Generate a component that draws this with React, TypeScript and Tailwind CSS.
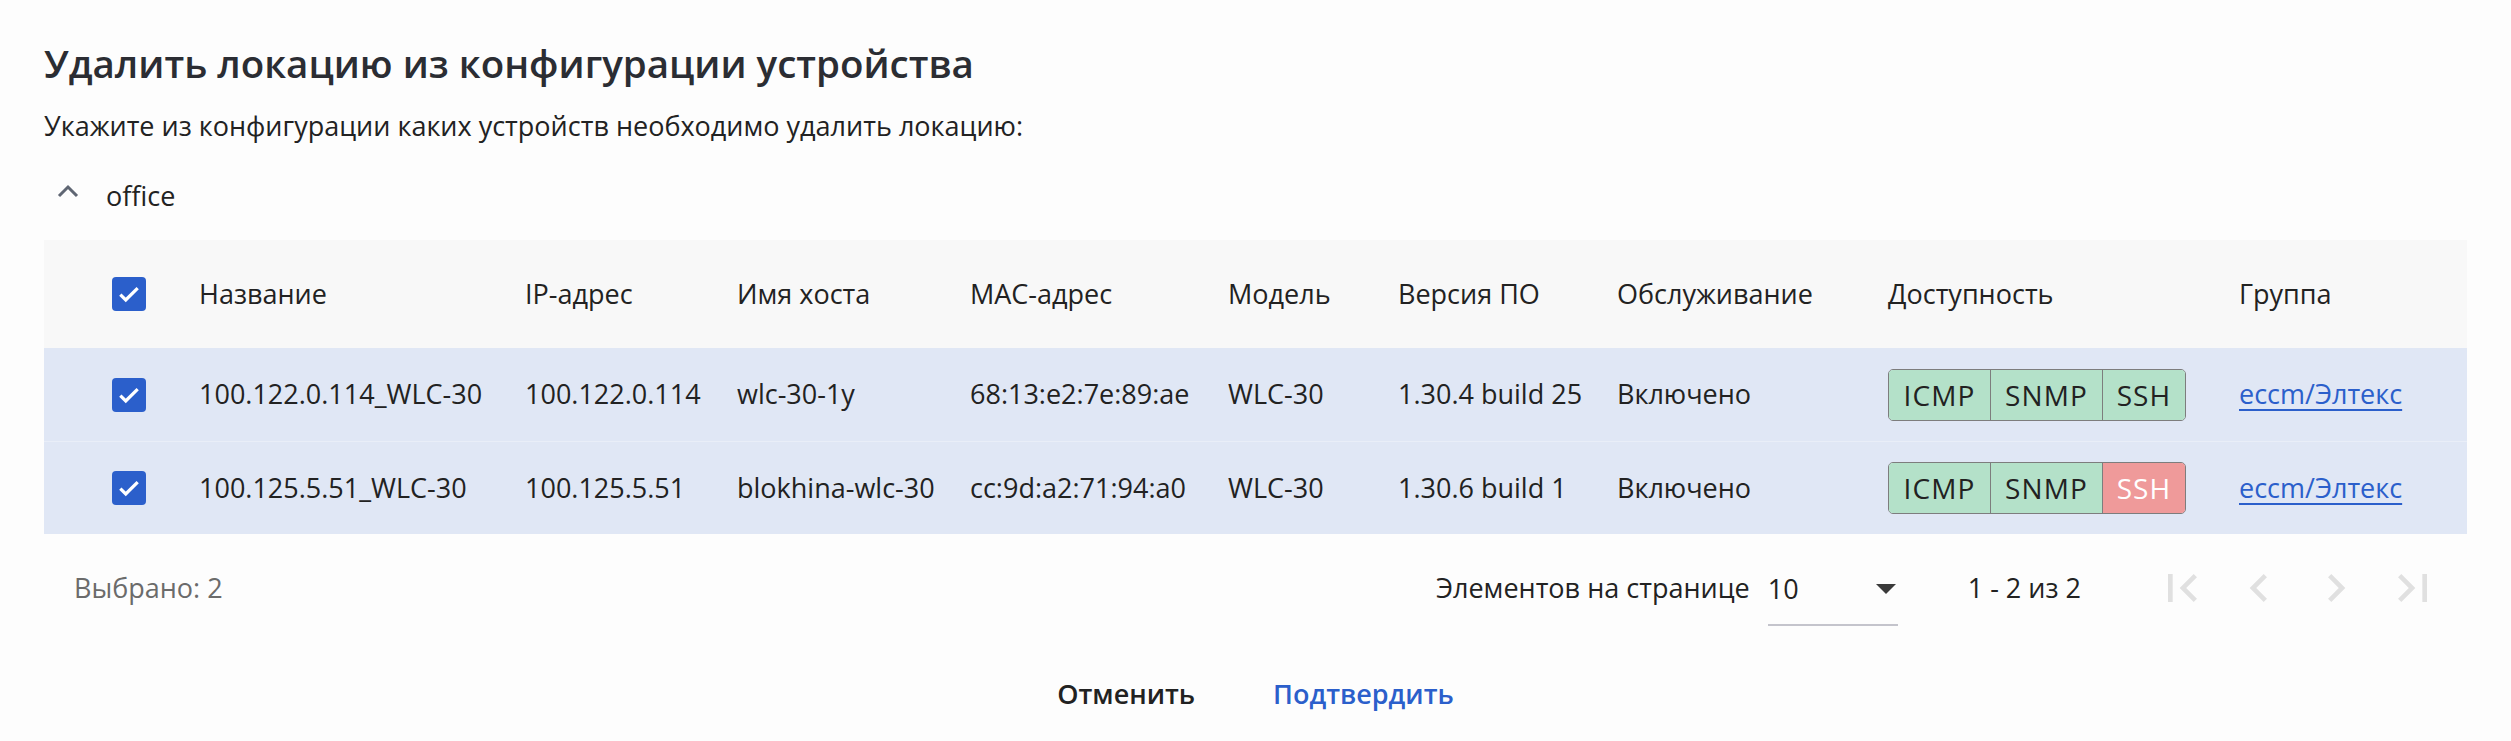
import React from "react";

const rows = [
  {
    name: "100.122.0.114_WLC-30",
    ip: "100.122.0.114",
    host: "wlc-30-1y",
    mac: "68:13:e2:7e:89:ae",
    model: "WLC-30",
    version: "1.30.4 build 25",
    service: "Включено",
    ssh: true,
    group: "eccm/Элтекс",
  },
  {
    name: "100.125.5.51_WLC-30",
    ip: "100.125.5.51",
    host: "blokhina-wlc-30",
    mac: "cc:9d:a2:71:94:a0",
    model: "WLC-30",
    version: "1.30.6 build 1",
    service: "Включено",
    ssh: false,
    group: "eccm/Элтекс",
  },
];

const cols = "grid grid-cols-[155px_326px_212px_233px_258px_170px_219px_271px_351px_1fr] items-center";

function Checkbox() {
  return (
    <span className="flex h-[34px] w-[34px] items-center justify-center rounded-[4px] bg-[#2b5fcb]">
      <svg width="26" height="26" viewBox="0 0 24 24" fill="none">
        <path d="M4 12.5l5 5L20 6.5" stroke="white" strokeWidth="3" />
      </svg>
    </span>
  );
}

function Access({ ssh }: { ssh: boolean }) {
  return (
    <div className="flex h-[52px] w-fit overflow-hidden rounded-[5px] border border-[#7d7d7d] text-[28px] tracking-[0.04em] text-[#222]">
      <span className="flex w-[101px] items-center justify-center bg-[#b4e1c9]">ICMP</span>
      <span className="flex w-[112px] items-center justify-center border-l border-[#7d7d7d] bg-[#b4e1c9]">SNMP</span>
      <span
        className={`flex w-[83px] items-center justify-center border-l border-[#7d7d7d] ${ssh ? "bg-[#b4e1c9]" : "bg-[#ef9a9a] text-white"}`}
      >
        SSH
      </span>
    </div>
  );
}

function PageIcon({ d }: { d: string }) {
  return (
    <button className="flex h-[77px] w-[77px] items-center justify-center">
      <svg width="56" height="56" viewBox="0 0 24 24" fill="#e0e0e0">
        <path d={d} />
      </svg>
    </button>
  );
}

export default function App() {
  return (
    <div
      className="min-h-[741px] bg-[#fdfdfd] px-[44px] pt-[37px] text-[#222]"
      style={{ fontFamily: '"Open Sans", "Noto Sans", sans-serif' }}
    >
      <h1 className="text-[38.5px] font-semibold leading-[52px] text-[#2b2d33]">Удалить локацию из конфигурации устройства</h1>
      <p className="mt-[19px] text-[27px] leading-[36px]">Укажите из конфигурации каких устройств необходимо удалить локацию:</p>

      <div className="mt-[34px] flex h-[36px] items-center">
        <svg className="ml-[13px] mb-[10px]" width="22" height="14" viewBox="0 0 22 14" fill="none">
          <path d="M2 12L11 3l9 9" stroke="#5f6673" strokeWidth="3" />
        </svg>
        <span className="ml-[27px] text-[27px] leading-[36px]">office</span>
      </div>

      <div className="mt-[26px] text-[27px]">
        <div className={`${cols} h-[108px] bg-[#f8f8f8]`}>
          <div className="pl-[68px]">
            <Checkbox />
          </div>
          <span>Название</span>
          <span>IP-адрес</span>
          <span>Имя хоста</span>
          <span>MAC-адрес</span>
          <span>Модель</span>
          <span>Версия ПО</span>
          <span>Обслуживание</span>
          <span>Доступность</span>
          <span>Группа</span>
        </div>
        {rows.map((row, i) => (
          <div key={row.name} className={`${cols} h-[93px] bg-[#e0e7f5] ${i > 0 ? "border-t border-[#e9eef8]" : ""}`}>
            <div className="pl-[68px]">
              <Checkbox />
            </div>
            <span>{row.name}</span>
            <span>{row.ip}</span>
            <span>{row.host}</span>
            <span>{row.mac}</span>
            <span>{row.model}</span>
            <span>{row.version}</span>
            <span>{row.service}</span>
            <Access ssh={row.ssh} />
            <a href="#" className="text-[#2b5fcb] underline underline-offset-[5px]">
              {row.group}
            </a>
          </div>
        ))}

        <div className="flex h-[108px] items-center pl-[30px] pr-[16px]">
          <span className="text-[#6b6b6b]">Выбрано: 2</span>
          <div className="ml-auto flex items-center">
            <span>Элементов на странице</span>
            <div className="relative ml-[18px] flex h-[76px] w-[130px] items-center border-b-2 border-[#c4c4cc] pt-[4px]">
              <span>10</span>
              <svg className="absolute right-[2px]" width="20" height="10" viewBox="0 0 20 10">
                <path d="M0 0h20L10 10z" fill="#3a3a3a" />
              </svg>
            </div>
            <span className="ml-[70px]">1 - 2 из 2</span>
            <div className="ml-[62px] flex">
              <PageIcon d="M18.41 16.59L13.82 12l4.59-4.59L17 6l-6 6 6 6zM6 6h2v12H6z" />
              <PageIcon d="M15.41 7.41L14 6l-6 6 6 6 1.41-1.41L10.83 12z" />
              <PageIcon d="M10 6L8.59 7.41 13.17 12l-4.58 4.59L10 18l6-6z" />
              <PageIcon d="M5.59 7.41L10.18 12l-4.59 4.59L7 18l6-6-6-6zM16 6h2v12h-2z" />
            </div>
          </div>
        </div>
      </div>

      <div className="mt-[34px] flex justify-center gap-[78px] text-[27px] font-semibold leading-[36px]">
        <button className="text-[#222]">Отменить</button>
        <button className="text-[#2b5fcb]">Подтвердить</button>
      </div>
    </div>
  );
}
